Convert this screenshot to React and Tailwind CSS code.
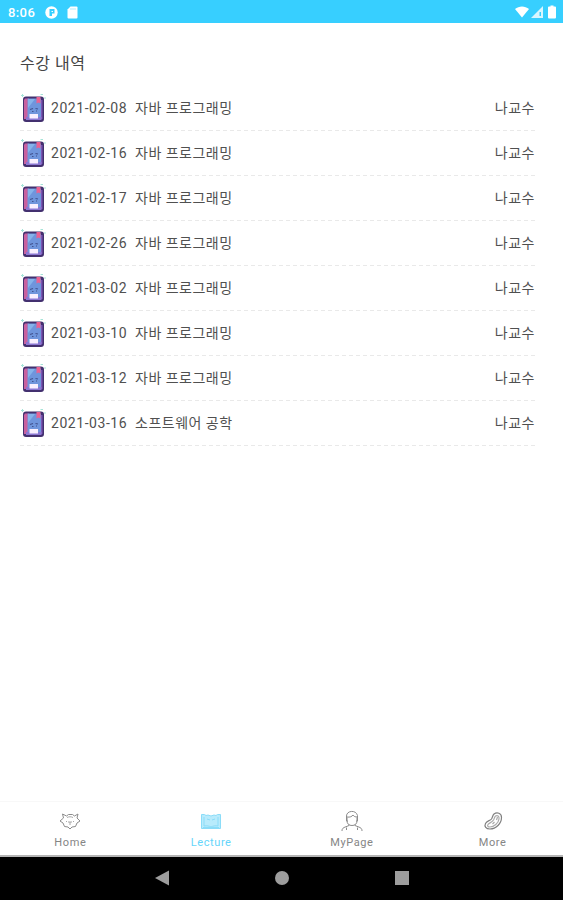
const lectures = [
  { date: "2021-02-08", name: "자바 프로그래밍", professor: "나교수" },
  { date: "2021-02-16", name: "자바 프로그래밍", professor: "나교수" },
  { date: "2021-02-17", name: "자바 프로그래밍", professor: "나교수" },
  { date: "2021-02-26", name: "자바 프로그래밍", professor: "나교수" },
  { date: "2021-03-02", name: "자바 프로그래밍", professor: "나교수" },
  { date: "2021-03-10", name: "자바 프로그래밍", professor: "나교수" },
  { date: "2021-03-12", name: "자바 프로그래밍", professor: "나교수" },
  { date: "2021-03-16", name: "소프트웨어 공학", professor: "나교수" },
];

const BookIcon = () => (
  <svg className="w-[26px] h-[30px] shrink-0" viewBox="0 0 26 30">
    <rect x="3" y="3.500" width="21" height="25.500" rx="3" fill="#43306f" />
    <path d="M5 5.500h4V26H4V7z" fill="#c9619f" />
    <path d="M7.500 5.500H21V24H7.500z" fill="#6f95dc" />
    <path d="M8 6h7L8 15z" fill="#86b3ea" />
    <path d="M21 7h1.500v19H21z" fill="#7a55b4" />
    <path d="M6 24h15.500v3H6z" fill="#8a76d2" />
    <path d="M16.500 4h4v6.500l-2-1-2 1z" fill="#ea6292" />
    <path d="M10 16.500l3-1m2.500 0 2.500.5M12 18.500h1.500m2.500-.5h1" stroke="#41528f" strokeWidth="1.100" />
    <rect x="9.500" y="21" width="8.500" height="4.500" fill="#f8efff" />
    <path d="M1 2.500h3M2.500 1v3M20.500 1.500h2.500M25 4v2" stroke="#a5e4d8" />
  </svg>
);

const HomeIcon = () => (
  <svg className="w-6 h-6" viewBox="0 0 24 24" fill="none" stroke="#8c8c8c" strokeWidth="1">
    <path d="M5.500 9 4.500 5l4 2 2-1.500h4l2 1.500 3.500-2-1 4 3 3-3 2-1.500 3.500-3.500.5-2 2-2-2-3.500-.5L5 14l-3-2z" />
    <path d="M9 8.500c2-1 4-1 6 0M8.500 12v1m7-1v1M12 13v3m-2-3h4" stroke="#a8a8a8" />
  </svg>
);

const LectureIcon = () => (
  <svg className="w-6 h-6" viewBox="0 0 24 24" fill="none" stroke="#8bdcf8" strokeWidth="1">
    <path d="M2.500 5.500h3l1.500 1 2-.5 3 1 3-1 2 .5 1.500-1h3v14h-19z" fill="#b8ebfc" />
    <path d="M5 8v9c3-.5 5 0 7 1 2-1 4-1.500 7-1V8M4 18.500h16M8 10l3 1m2 0 3-1" />
  </svg>
);

const PersonIcon = () => (
  <svg className="w-6 h-6" viewBox="0 0 24 24" fill="none" stroke="#8c8c8c" strokeWidth="1">
    <path d="M6.500 10V7C6.500 1.500 16 .5 17.500 6.500V10M7 8c3 .5 5-.5 6-2 1 1.500 2 2 4.500 2" />
    <path d="M7 8.500v3c0 3.500 2 5 5 5s5-1.500 5-5v-3M6.500 9v3H8m9.500-3v3H16" />
    <path d="M9 15.500v1l-5 2c-1.500 1-2 1.500-2 3.500M15 15.500v1l5 2c1.500 1 2 1.500 2 3.500M6.500 18.500V21M17.500 18.500V21" />
  </svg>
);

const BeanIcon = () => (
  <svg className="w-6 h-6" viewBox="0 0 24 24" fill="none" stroke="#808080" strokeWidth="1.200">
    <path d="M13 5c3-2 7.500-1 7.500 3.500 0 6-5.500 11.500-11.500 11.500-4 0-6-2.500-4.500-5.500S9 12 10.500 10c1-1.500 1-3.500 2.500-5z" />
    <path d="M14.500 7c2-1 4 0 3.500 3-.5 4-5 8-9 8-2 0-3-1-2-2.500s4-2 5.500-4.500c1-1.500.5-2.500 2-4z" stroke="#aaa" />
    <path d="m16.500 8-1 3m-2 2-2 2" stroke="#aaa" />
  </svg>
);

const tabs = [
  { label: "Home", Icon: HomeIcon },
  { label: "Lecture", Icon: LectureIcon, active: true },
  { label: "MyPage", Icon: PersonIcon },
  { label: "More", Icon: BeanIcon },
];

const StatusBar = () => (
  <div className="h-[23px] shrink-0 bg-[#37cfff] flex items-center justify-between pl-2 pr-[7px] text-white">
    <div className="flex items-center">
      <span className="w-[37px] text-[13px] font-medium leading-none tracking-[0.4px] pt-0.5">8:06</span>
      <svg className="w-[13px] h-[13px] mt-px" viewBox="0 0 13 13">
        <circle cx="6.500" cy="6.500" r="6.200" fill="white" />
        <path d="M4.500 3h5v4.500H7V10H4.500z" fill="#37cfff" />
        <path d="M6.500 5h1.500v1H6.500z" fill="white" />
      </svg>
      <svg className="w-[11px] h-[13px] ml-[9px] mt-px" viewBox="0 0 11 13">
        <path d="M3.500.5h6q1 0 1 1v10q0 1-1 1h-8q-1 0-1-1v-8z" fill="white" />
        <path d="M4 2v2m2-2v2m2-2v2" stroke="#9be8ff" strokeWidth=".8" />
      </svg>
    </div>
    <div className="flex items-center">
      <svg className="w-3.5 h-3" viewBox="0 0 14 12">
        <path d="M0 3c4-3.500 10-3.500 14 0L7 11.500z" fill="white" />
      </svg>
      <svg className="w-3 h-3 ml-0.5" viewBox="0 0 12 12">
        <path d="M0 12 12 0v12z" fill="white" opacity=".8" />
        <path d="M8.500 6H10v4H8.500z" fill="#37cfff" />
      </svg>
      <svg className="w-2 h-3.5 ml-[5px]" viewBox="0 0 8 14">
        <path d="M2.500.5h3v1H7q1 0 1 1v10q0 1-1 1H1q-1 0-1-1v-10q0-1 1-1h1.500z" fill="white" />
      </svg>
    </div>
  </div>
);

const LectureRow = ({ date, name, professor }) => (
  <li className="h-[45px] flex flex-col">
    <div className="flex-1 flex items-center text-sm leading-none tracking-[0.5px] text-[#505050]">
      <BookIcon />
      <span className="w-[84px] ml-[5px] tracking-[0.55px]">{date}</span>
      <span className="flex-1">{name}</span>
      <span>{professor}</span>
    </div>
    <svg className="w-full h-px" aria-hidden="true">
      <line x1="0" y1=".5" x2="100%" y2=".5" stroke="#e9e9e9" strokeDasharray="4 3" />
    </svg>
  </li>
);

const SystemNav = () => (
  <div className="h-[45px] shrink-0 border-t-2 border-[#b5b5b5] bg-black flex items-center justify-center">
    <svg className="w-[254px] h-4 mb-0.5" viewBox="0 0 254 16">
      <path d="M0 8 14 .5v15z" fill="#9d9d9d" />
      <circle cx="127" cy="8" r="7" fill="#9d9d9d" />
      <path d="M240 1h14v14h-14z" fill="#9d9d9d" />
    </svg>
  </div>
);

const App = () => {
  return (
    <div className="w-full h-screen flex flex-col overflow-hidden bg-white font-[Roboto,'Noto_Sans_CJK_KR',sans-serif]">
      <StatusBar />
      <main className="flex-1 pl-5 pr-7">
        <h1 className="pt-[31px] h-[63px] text-base leading-5 tracking-[0.5px] text-[#454545]">
          수강 내역
        </h1>
        <ul>
          {lectures.map((lecture) => (
            <LectureRow key={lecture.date} {...lecture} />
          ))}
        </ul>
      </main>
      <nav className="h-[54px] shrink-0 grid grid-cols-4 border-t border-[#f8f8f8] bg-white">
        {tabs.map(({ label, Icon, active }) => (
          <div key={label} className="flex flex-col items-center pt-[7px]">
            <Icon />
            <span
              className={`mt-1 text-[11px] leading-3 tracking-[0.6px] ${
                active ? "text-[#65d5fa]" : "text-[#858585]"
              }`}
            >
              {label}
            </span>
          </div>
        ))}
      </nav>
      <SystemNav />
    </div>
  );
};

export default App;
